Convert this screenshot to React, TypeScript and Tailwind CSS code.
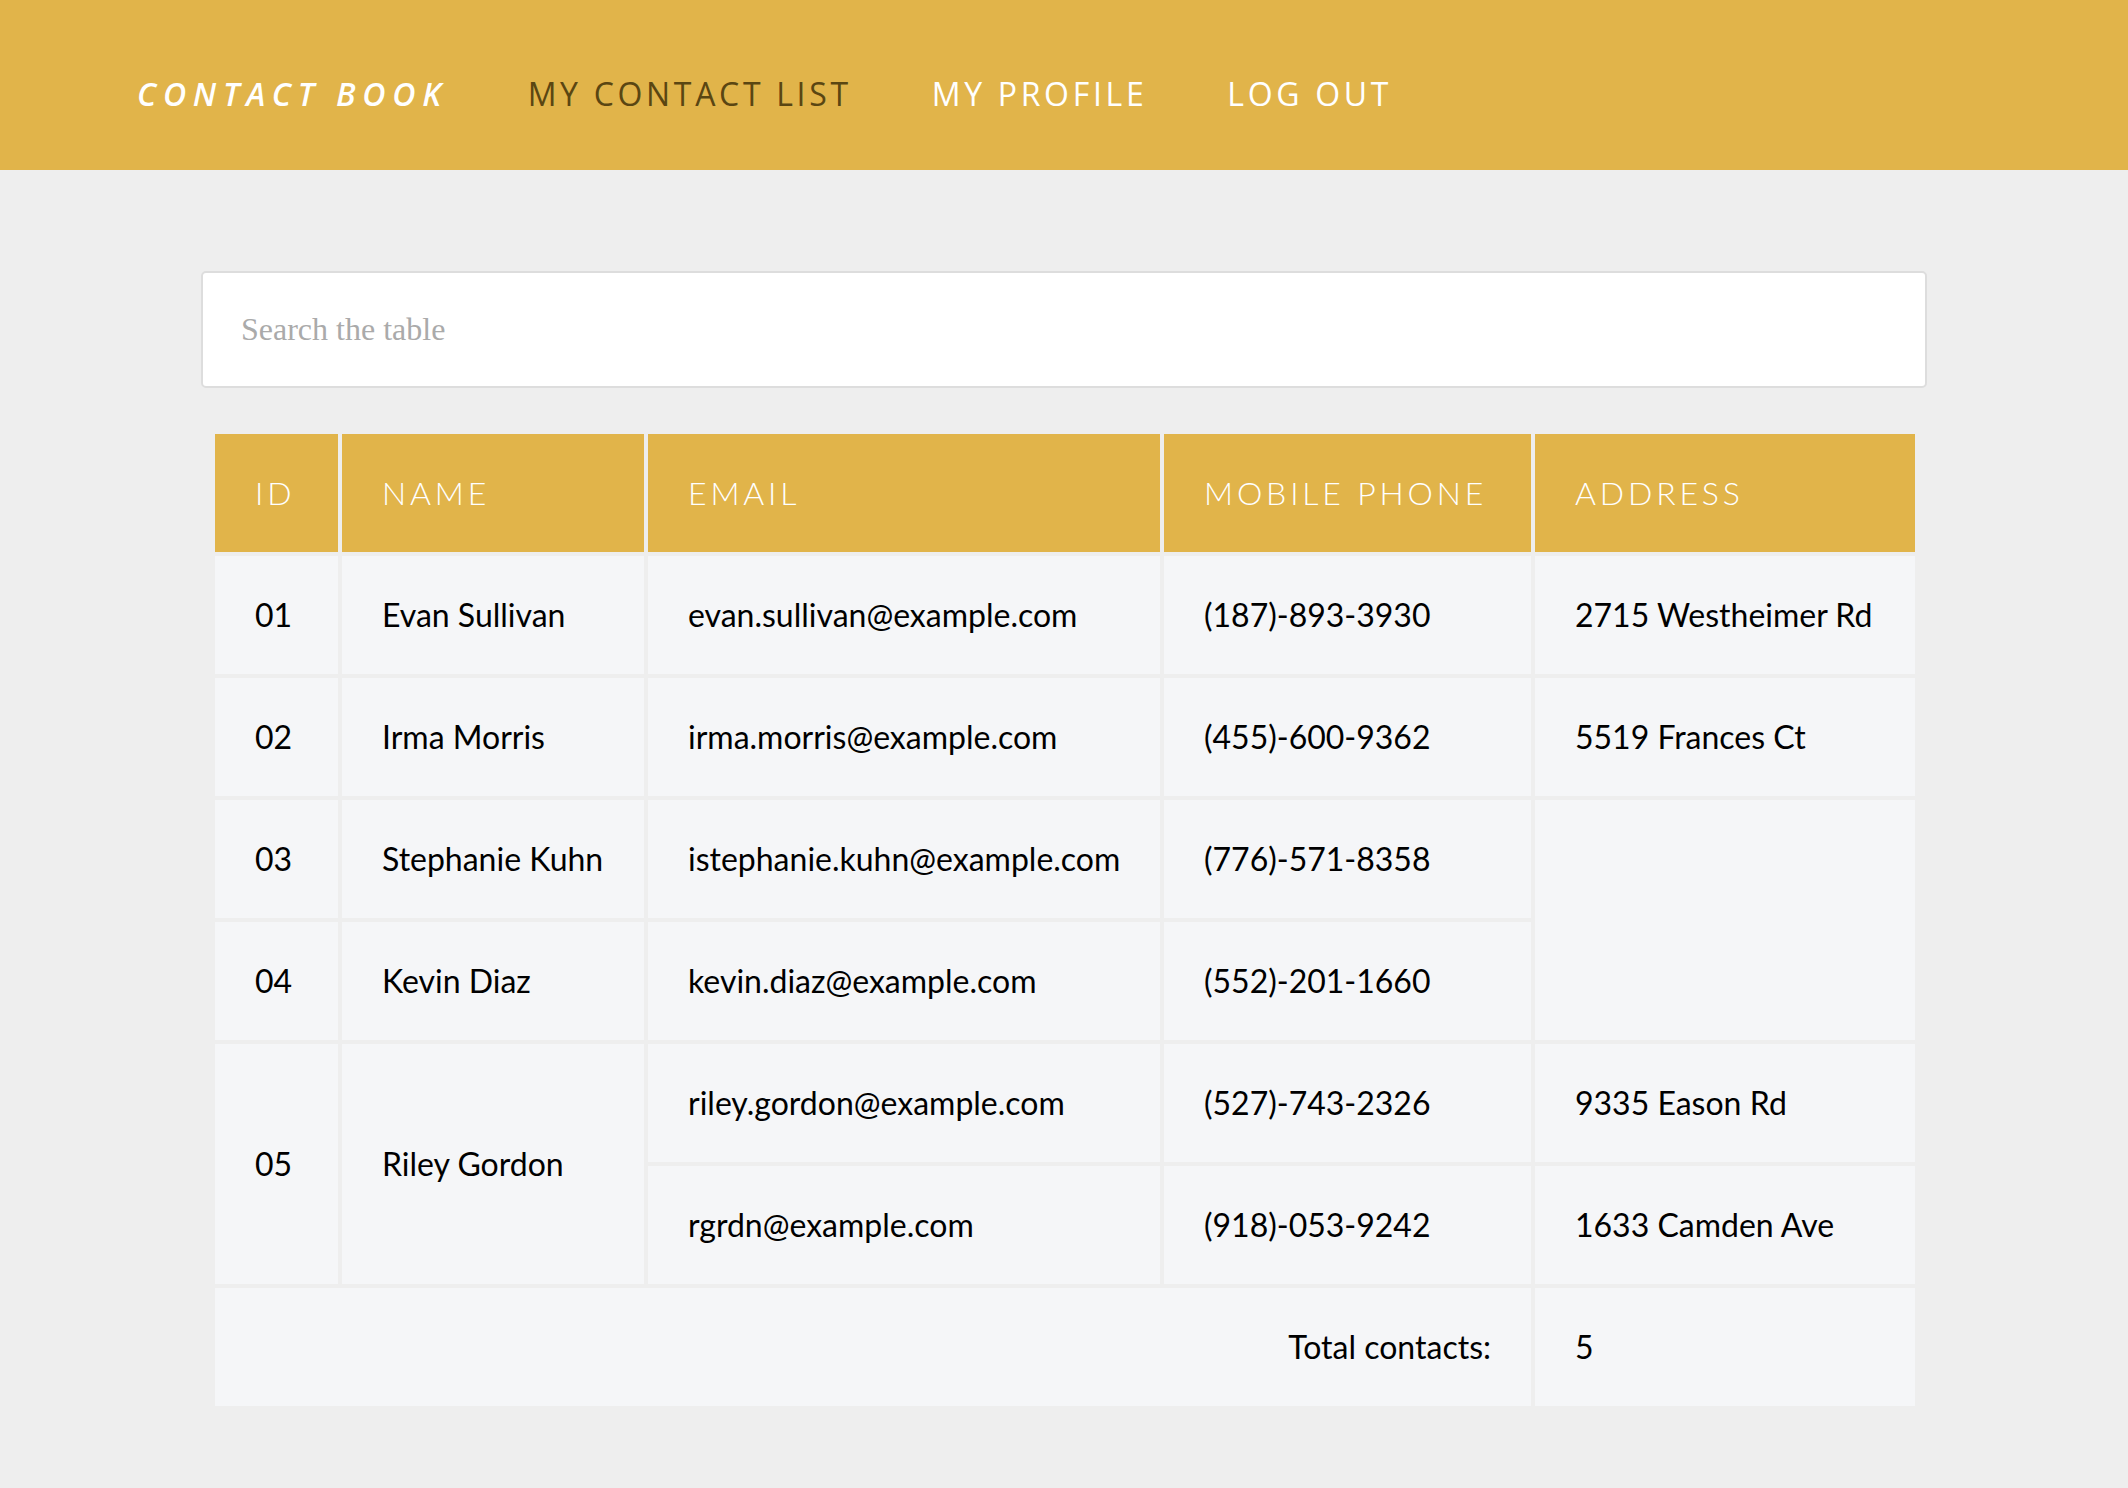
import { useState } from "react";

const navLinks = [
  { label: "My Contact List", active: true },
  { label: "My Profile", active: false },
  { label: "Log Out", active: false },
];

const cell =
  "bg-[#f5f6f8] flex items-center px-[40px] text-[32px] text-black font-['Lato','Liberation_Sans',sans-serif]";

const headCell =
  "bg-[#e1b44a] flex items-center px-[40px] text-[32px] font-light uppercase tracking-[0.12em] text-white font-['Lato','Liberation_Sans',sans-serif]";

const Header = () => {
  return (
    <header className="h-[170px] bg-[#e1b44a] flex items-center pt-[18px] pl-[137px] gap-[80px] font-['Open_Sans','Liberation_Sans',sans-serif] text-[32px] uppercase tracking-[0.115em]">
      <span className="italic font-semibold tracking-[0.21em] text-white">
        Contact Book
      </span>
      {navLinks.map((link) => (
        <a
          key={link.label}
          href="#"
          className={link.active ? "text-[#5a4612]" : "text-white"}
        >
          {link.label}
        </a>
      ))}
    </header>
  );
};

const App = () => {
  const [query, setQuery] = useState("");

  return (
    <div className="min-h-screen bg-[#eeeeee]">
      <Header />
      <main className="w-[1726px] mx-auto pt-[101px] pb-20">
        <input
          type="text"
          value={query}
          onChange={(e) => setQuery(e.target.value)}
          placeholder="Search the table"
          className="w-full h-[117px] bg-white border-2 border-[#dddddd] rounded-[5px] px-[38px] text-[32px] font-['Liberation_Serif',serif] text-black placeholder:text-[#aaaaaa] outline-none"
        />
        <div className="mt-[46px] ml-[14px] w-[1700px] grid grid-cols-[123px_302px_512px_367px_380px] auto-rows-[118px] gap-[4px]">
          <div className={headCell}>ID</div>
          <div className={headCell}>Name</div>
          <div className={headCell}>Email</div>
          <div className={headCell}>Mobile Phone</div>
          <div className={headCell}>Address</div>

          <div className={cell}>01</div>
          <div className={cell}>Evan Sullivan</div>
          <div className={cell}>evan.sullivan@example.com</div>
          <div className={cell}>(187)-893-3930</div>
          <div className={cell}>2715 Westheimer Rd</div>

          <div className={cell}>02</div>
          <div className={cell}>Irma Morris</div>
          <div className={cell}>irma.morris@example.com</div>
          <div className={cell}>(455)-600-9362</div>
          <div className={cell}>5519 Frances Ct</div>

          <div className={cell}>03</div>
          <div className={cell}>Stephanie Kuhn</div>
          <div className={cell}>istephanie.kuhn@example.com</div>
          <div className={cell}>(776)-571-8358</div>
          <div className={`${cell} row-span-2`}></div>

          <div className={cell}>04</div>
          <div className={cell}>Kevin Diaz</div>
          <div className={cell}>kevin.diaz@example.com</div>
          <div className={cell}>(552)-201-1660</div>

          <div className={`${cell} row-span-2`}>05</div>
          <div className={`${cell} row-span-2`}>Riley Gordon</div>
          <div className={cell}>riley.gordon@example.com</div>
          <div className={cell}>(527)-743-2326</div>
          <div className={cell}>9335 Eason Rd</div>
          <div className={cell}>rgrdn@example.com</div>
          <div className={cell}>(918)-053-9242</div>
          <div className={cell}>1633 Camden Ave</div>

          <div className={`${cell} col-span-4 justify-end`}>Total contacts:</div>
          <div className={cell}>5</div>
        </div>
      </main>
    </div>
  );
};

export default App;
